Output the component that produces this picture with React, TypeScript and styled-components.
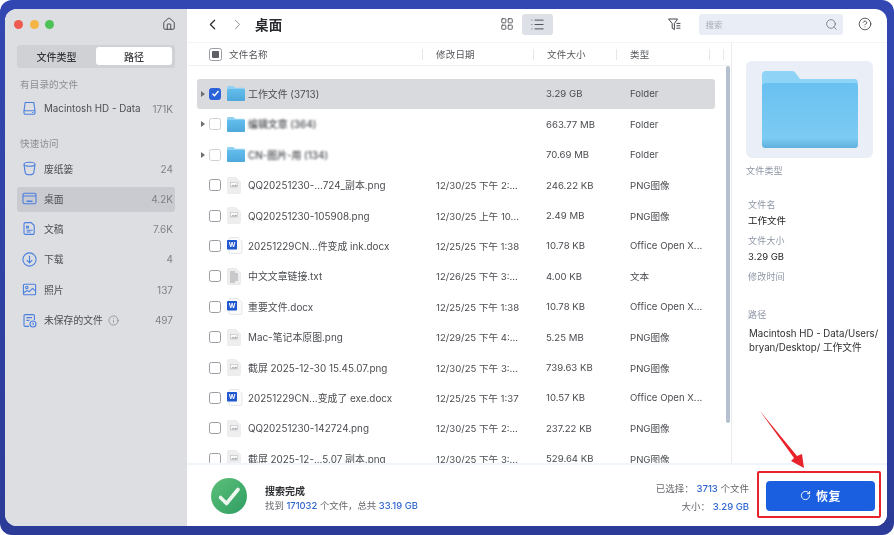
import React from "react";
import styled, { createGlobalStyle } from "styled-components";
import { ChevronLeft, ChevronRight, House, Search, CircleHelp, RotateCw, Info, LayoutGrid, List as ListIcon } from "lucide-react";

const Global = createGlobalStyle`
  html, body { margin: 0; padding: 0; background: #fff; }
  body { font-family: Inter, "Noto Sans CJK SC", sans-serif; overflow: hidden; }
  * { box-sizing: border-box; }
`;

const Frame = styled.div`
  position: relative;
  width: 894px;
  height: 535px;
  padding: 9px 7px 9px 5px;
  border-radius: 12px;
  background: linear-gradient(180deg, #3347b2 0%, #2b3b97 100%);
  filter: blur(0.3px);
`;
const Win = styled.div`
  height: 517px;
  display: flex;
  border-radius: 12px;
  overflow: hidden;
  background: #fff;
`;
const Sidebar = styled.aside`
  width: 182px;
  flex: none;
  background: #dcdee2;
  padding: 0 12px;
  display: flex;
  flex-direction: column;
`;
const TitleBar = styled.div`
  height: 30px;
  display: flex;
  align-items: center;
  gap: 6.5px;
  color: #3f4145;
`;
const Light = styled.span<{ $c: string }>`
  width: 9px;
  height: 9px;
  border-radius: 50%;
  background: ${(p) => p.$c};
  margin-left: ${(p) => (p.$c === "#ee5a50" ? "-3px" : "0")};
`;
const HomeBtn = styled.span`
  margin-left: auto;
  margin-right: -1px;
  display: flex;
  color: #3a3c40;
`;
const Segment = styled.div`
  margin-top: 6px;
  height: 23px;
  background: #cfd1d5;
  border-radius: 3px;
  display: flex;
  padding: 2px 3px 3px 0;
`;
const SegItem = styled.div<{ $on?: boolean }>`
  flex: ${(p) => (p.$on ? "0 0 76px" : "1")};
  background: ${(p) => (p.$on ? "#fff" : "transparent")};
  border-radius: 3px;
  font-size: 10px;
  font-weight: 500;
  color: #36383b;
  display: flex;
  align-items: center;
  justify-content: center;
`;
const SecTitle = styled.div<{ $mt: number }>`
  margin-top: ${(p) => p.$mt}px;
  height: 14px;
  line-height: 14px;
  padding-left: 3px;
  font-size: 9.5px;
  letter-spacing: 0.2px;
  color: #8b8d91;
`;
const SideRow = styled.div<{ $on?: boolean; $mt: number }>`
  margin-top: ${(p) => p.$mt}px;
  height: 25px;
  display: flex;
  align-items: center;
  padding: 0 2px 1px 5px;
  border-radius: 3px;
  background: ${(p) => (p.$on ? "#c9cbd0" : "transparent")};
  font-size: 9.8px;
  color: #4c4e52;
`;
const SideIcon = styled.span`
  width: 22px;
  flex: none;
  display: flex;
  align-items: center;
  color: #4b7fde;
`;
const SideHint = styled.span`
  display: inline-flex;
  margin-left: 5px;
  color: #5f6165;
`;
const SideCount = styled.span`
  margin-left: auto;
  color: #808286;
  font-size: 10px;
`;
const Main = styled.main`
  flex: 1;
  min-width: 0;
  display: flex;
  flex-direction: column;
`;
const Toolbar = styled.div`
  height: 34px;
  flex: none;
  display: flex;
  align-items: center;
  padding: 0 12px 3px 0;
  border-bottom: 1px solid #f3f4f6;
`;
const NavBtn = styled.span<{ $off?: boolean; $ml: number }>`
  display: flex;
  margin-left: ${(p) => p.$ml}px;
  color: ${(p) => (p.$off ? "#8f9195" : "#2f3135")};
`;
const PageTitle = styled.h1`
  margin: 0 0 0 9px;
  font-size: 13.5px;
  font-weight: 600;
  letter-spacing: 0.2px;
  color: #2a2b2e;
`;
const ViewBtn = styled.span<{ $on?: boolean; $ml: number }>`
  width: 31px;
  height: 21px;
  margin-left: ${(p) => p.$ml}px;
  display: flex;
  align-items: center;
  justify-content: center;
  border-radius: 3px;
  color: #3e4045;
  background: ${(p) => (p.$on ? "#dde0e6" : "transparent")};
`;
const FilterBtn = styled.span`
  margin-left: 114px;
  display: flex;
  color: #44464b;
`;
const SearchBox = styled.div`
  margin-left: 17px;
  width: 144px;
  height: 21px;
  background: #e9edf5;
  border-radius: 3px;
  display: flex;
  align-items: center;
  justify-content: space-between;
  padding: 0 5px 0 6px;
  font-size: 8.5px;
  color: #a7abb3;
`;
const HelpBtn = styled.span`
  margin-left: 15px;
  display: flex;
  color: #3a3c40;
`;
const Content = styled.div`
  flex: 1;
  min-height: 0;
  display: flex;
`;
const ListPane = styled.section`
  position: relative;
  width: 544px;
  flex: none;
  overflow: hidden;
`;
const HeaderRow = styled.div`
  height: 23px;
  display: grid;
  grid-template-columns: 22px 18px 196px 111px 83px 93px 14px;
  align-items: center;
  border-bottom: 1px solid #f0f1f4;
  font-size: 9.5px;
  letter-spacing: 0.2px;
  color: #55575b;
`;
const HCell = styled.div<{ $pad: number }>`
  height: 11px;
  line-height: 11px;
  padding-left: ${(p) => p.$pad}px;
  border-right: 1px solid #e6e7ea;
  white-space: nowrap;
`;
const Rows = styled.div`
  padding: 12.8px 0 0 10px;
`;
const Row = styled.div<{ $sel?: boolean }>`
  position: relative;
  height: 30.4px;
  width: 518px;
  padding: 0.7px 0;
  color: #4a4c50;
  font-size: 9.6px;
  &::before {
    content: "";
    position: absolute;
    inset: 0.7px 0;
    border-radius: 3px;
    background: ${(p) => (p.$sel ? "#d8dadd" : "transparent")};
  }
`;
const RowGrid = styled.div`
  position: relative;
  height: 29px;
  display: grid;
  grid-template-columns: 12px 18px 21px 188px 110px 84px 85px;
  align-items: center;
`;
const Arrow = styled.span`
  width: 0;
  height: 0;
  margin-left: 4px;
  border-left: 4px solid #6d6f73;
  border-top: 3px solid transparent;
  border-bottom: 3px solid transparent;
`;
const Check = styled.span<{ $on?: boolean; $big?: boolean; $soft?: boolean }>`
  width: ${(p) => (p.$big ? 13 : 12)}px;
  height: ${(p) => (p.$big ? 13 : 12)}px;
  border-radius: 2.5px;
  border: 1px solid ${(p) => (p.$on ? "#2a62d8" : p.$soft ? "#cfd0d4" : "#9b9da3")};
  background: ${(p) => (p.$on ? "#2a62d8" : "#fff")};
  display: flex;
  align-items: center;
  justify-content: center;
  color: #fff;
  ${(p) => (p.$soft ? "filter: blur(0.6px);" : "")}
`;
const HeadMark = styled.span`
  width: 7px;
  height: 7px;
  border-radius: 1px;
  background: #5e6066;
`;
const IconSlot = styled.span<{ $soft?: boolean }>`
  display: flex;
  align-items: center;
  ${(p) => (p.$soft ? "filter: blur(0.5px);" : "")}
`;
const Name = styled.span<{ $blur?: boolean }>`
  white-space: nowrap;
  font-size: 9.9px;
  ${(p) => (p.$blur ? "filter: blur(1.2px); font-weight: 500;" : "")}
`;
const Cell = styled.span`
  white-space: nowrap;
`;
const Scrollbar = styled.div`
  position: absolute;
  top: 23px;
  left: 539px;
  width: 4px;
  height: 357px;
  border-radius: 2px;
  background: #b4bfcf;
`;
const Detail = styled.aside`
  flex: 1;
  border-left: 1px solid #e9ebf0;
  padding: 18px 14px 0 14px;
  font-size: 9.5px;
`;
const Tile = styled.div`
  width: 127px;
  height: 97px;
  border-radius: 6px;
  background: #e9eef7;
  display: flex;
  align-items: center;
  justify-content: center;
`;
const DLabel = styled.div<{ $mt: number; $ml?: number }>`
  margin-top: ${(p) => p.$mt}px;
  margin-left: ${(p) => p.$ml ?? 2}px;
  height: 14px;
  line-height: 14px;
  color: #8e96a6;
  font-size: 9px;
  letter-spacing: 0.2px;
`;
const DValue = styled.div<{ $mt: number }>`
  margin-top: ${(p) => p.$mt}px;
  margin-left: 2px;
  height: 14px;
  line-height: 14px;
  color: #222326;
  font-size: 9.5px;
`;
const PathText = styled.div`
  margin: 5px 0 0 3px;
  width: 134px;
  font-size: 9.7px;
  line-height: 14px;
  color: #2f3033;
`;
const Bottom = styled.footer`
  height: 63px;
  flex: none;
  border-top: 2px solid #f0f5fb;
  background: #fff;
  display: flex;
  align-items: center;
  padding: 0 12px 0 24px;
`;
const Done = styled.div`
  margin: 6px 0 0 18px;
  display: flex;
  flex-direction: column;
  gap: 1px;
`;
const DoneTitle = styled.div`
  font-size: 10px;
  font-weight: 600;
  line-height: 13px;
  color: #2f3033;
`;
const DoneSub = styled.div`
  font-size: 9.4px;
  line-height: 13px;
  color: #65676c;
  white-space: nowrap;
`;
const Blue = styled.span`
  color: #2f66cf;
  font-weight: 500;
`;
const Selected = styled.div`
  margin: 4px 0 0 auto;
  display: flex;
  flex-direction: column;
  align-items: flex-end;
  gap: 5px;
  font-size: 9.5px;
  line-height: 13px;
  color: #65676c;
`;
const Restore = styled.button`
  margin-left: 17px;
  width: 109px;
  height: 30px;
  border: 0;
  border-radius: 4px;
  background: #1a5fe0;
  color: #fff;
  font-family: inherit;
  font-size: 12px;
  font-weight: 600;
  letter-spacing: 0.6px;
  display: flex;
  align-items: center;
  justify-content: center;
  gap: 5px;
`;
const RedBox = styled.div`
  position: absolute;
  left: 757px;
  top: 471px;
  width: 124px;
  height: 47px;
  border: 2px solid #e8222b;
  border-radius: 2px;
`;
const RedArrow = styled.svg`
  position: absolute;
  left: 755px;
  top: 405px;
`;

const Drive = () => (
  <svg width="15" height="15" viewBox="0 0 15 15" fill="none" stroke="currentColor" strokeWidth="1.1">
    <path d="M3.2 1.5h8.6l1.2 8.2v2.2a1.4 1.4 0 0 1-1.4 1.4H3.4A1.4 1.4 0 0 1 2 11.9V9.7z" />
    <path d="M2 9.7h11M10.2 11.5h1.2" />
  </svg>
);
const Trash = () => (
  <svg width="15" height="15" viewBox="0 0 15 15" fill="none" stroke="currentColor" strokeWidth="1.1">
    <ellipse cx="7.5" cy="3.2" rx="5.5" ry="2" />
    <path d="M2 3.5l1.2 8.2c.2 1.3 2.2 2.1 4.3 2.1s4.1-.8 4.3-2.1L13 3.5" />
  </svg>
);
const Desk = () => (
  <svg width="15" height="15" viewBox="0 0 15 15" fill="none" stroke="currentColor" strokeWidth="1.1">
    <rect x="1" y="2.2" width="13" height="10.6" rx="1.6" />
    <path d="M1 5h13" />
    <path d="M4.5 10.2h6" strokeWidth="1.6" />
  </svg>
);
const Doc = () => (
  <svg width="15" height="15" viewBox="0 0 15 15" fill="none" stroke="currentColor" strokeWidth="1.1">
    <path d="M3.4 1.6h5.8l3 3v7.4a1.4 1.4 0 0 1-1.4 1.4H3.4A1.4 1.4 0 0 1 2 12V3a1.4 1.4 0 0 1 1.4-1.4z" />
    <path d="M4.6 5.2h1.8v1.8H4.6zM4.6 9.2h6M4.6 11h4" />
  </svg>
);
const Down = () => (
  <svg width="15" height="15" viewBox="0 0 15 15" fill="none" stroke="currentColor" strokeWidth="1.1" strokeLinecap="round" strokeLinejoin="round">
    <circle cx="7.5" cy="7.5" r="6.6" />
    <path d="M7.5 4v6.6M5 8.4l2.5 2.4L10 8.4" />
  </svg>
);
const Photo = () => (
  <svg width="15" height="15" viewBox="0 0 15 15" fill="none" stroke="currentColor" strokeWidth="1.1" strokeLinejoin="round">
    <rect x="1.4" y="2.2" width="12.2" height="10.6" rx="1" />
    <circle cx="4.8" cy="5.4" r="1.2" />
    <path d="M1.6 11l3.4-2.6 2 1.4 3.6-3.4 2.8 2.4" />
  </svg>
);
const Unsaved = () => (
  <svg width="15" height="15" viewBox="0 0 15 15" fill="none" stroke="currentColor" strokeWidth="1.1">
    <path d="M7 13.4H3.2A1.2 1.2 0 0 1 2 12.2V2.8a1.2 1.2 0 0 1 1.2-1.2h8a1.2 1.2 0 0 1 1.2 1.2V7" />
    <path d="M4.4 4.6h5.6M4.4 7.4h3" />
    <circle cx="11" cy="11" r="3" fill="#dcdee2" />
    <path d="M11 9.6V11l1 .7" />
  </svg>
);
const FilterIcon = () => (
  <svg width="15" height="15" viewBox="0 0 15 15" fill="none" stroke="currentColor" strokeWidth="1" strokeLinejoin="round">
    <path d="M1.5 2h9L7.4 6.4v6.2L5.2 11.2V6.4z" />
    <path d="M9.4 6.4h4M9.4 8.8h4M9.4 11.2h4" />
  </svg>
);
const FolderSmall = ({ id }: { id: string }) => (
  <svg width="18" height="15" viewBox="0 0 18 15">
    <defs>
      <linearGradient id={id} x1="0" y1="0" x2="0" y2="1">
        <stop offset="0" stopColor="#62bdec" />
        <stop offset="1" stopColor="#4fa8dc" />
      </linearGradient>
    </defs>
    <path d="M1.5 0h5l1.6 1.8H16.5A1.5 1.5 0 0 1 18 3.3V13.5A1.5 1.5 0 0 1 16.5 15H1.5A1.5 1.5 0 0 1 0 13.5V1.5A1.5 1.5 0 0 1 1.5 0z" fill="#8fd0f3" />
    <rect x="0" y="3" width="18" height="12" rx="1.2" fill={`url(#${id})`} />
  </svg>
);
const PngFile = () => (
  <svg width="14" height="17" viewBox="0 0 14 17">
    <path d="M1.5 0.5h7.5l4.5 4.5v10a1.5 1.5 0 0 1-1.5 1.5H1.5A1 1 0 0 1 .5 15.5v-14a1 1 0 0 1 1-1z" fill="#eeeeef" stroke="#e6e6e8" strokeWidth=".6" />
    <rect x="3.6" y="5.4" width="6.8" height="4.6" fill="#fafafa" stroke="#bcbdc0" strokeWidth=".6" />
    <path d="M4 9.6l2-1.8 1.4 1 1.4-1.4 1.2 1.4v.7H4z" fill="#a8a9ad" />
  </svg>
);
const TxtFile = () => (
  <svg width="14" height="17" viewBox="0 0 14 17">
    <path d="M1.5 0.5h7.5l4.5 4.5v10a1.5 1.5 0 0 1-1.5 1.5H1.5A1 1 0 0 1 .5 15.5v-14a1 1 0 0 1 1-1z" fill="#eeeeef" stroke="#e2e2e4" strokeWidth=".6" />
    <path d="M3 4h5M3 6h8M3 8h8M3 10h8M3 12h8M3 14h5" stroke="#a3a4a8" strokeWidth="1" />
  </svg>
);
const WordFile = () => (
  <svg width="16" height="17" viewBox="0 0 16 17">
    <path d="M3 0.5h8l4 4v10.5a1.5 1.5 0 0 1-1.5 1.5H3.5A1.5 1.5 0 0 1 2 15V1.5A1 1 0 0 1 3 .5z" fill="#fbfbfc" stroke="#d9dbe0" strokeWidth=".7" />
    <rect x="0" y="3" width="10" height="9.5" rx=".8" fill="#1f58cf" />
    <text x="5" y="10" fontSize="6.5" fill="#fff" textAnchor="middle" fontWeight="700" fontFamily="Inter, sans-serif">W</text>
  </svg>
);
const BigFolder = () => (
  <svg width="96" height="77" viewBox="0 0 96 77">
    <defs>
      <linearGradient id="bigf" x1="0" y1="0" x2="0" y2="1">
        <stop offset="0" stopColor="#69c1f0" />
        <stop offset=".85" stopColor="#7ccbf3" />
        <stop offset="1" stopColor="#5fb0dd" />
      </linearGradient>
    </defs>
    <path d="M4 0h26c2 0 3 1 4 2.5L38 8h54a4 4 0 0 1 4 4v20H0V4a4 4 0 0 1 4-4z" fill="#8fd3f6" />
    <rect x="0" y="12" width="96" height="65" rx="3.5" fill="url(#bigf)" />
  </svg>
);
const GreenCheck = () => (
  <svg width="36" height="36" viewBox="0 0 36 36">
    <defs>
      <linearGradient id="gc" x1="0" y1="0" x2="1" y2="1">
        <stop offset="0" stopColor="#5cc07a" />
        <stop offset="1" stopColor="#2f9d62" />
      </linearGradient>
    </defs>
    <circle cx="18" cy="18" r="18" fill="url(#gc)" />
    <path d="M9.5 19.5l6 6L27 11.5" fill="none" stroke="#eef7ef" strokeWidth="3.6" strokeLinecap="round" strokeLinejoin="round" />
  </svg>
);

type FileRow = {
  name: string;
  date?: string;
  size: string;
  type: string;
  icon: "folder" | "png" | "txt" | "word";
  blur?: boolean;
  sel?: boolean;
};
const files: FileRow[] = [
  { name: "工作文件 (3713)", size: "3.29 GB", type: "Folder", icon: "folder", sel: true },
  { name: "编辑文章 (364)", size: "663.77 MB", type: "Folder", icon: "folder", blur: true },
  { name: "CN-图片-用 (134)", size: "70.69 MB", type: "Folder", icon: "folder", blur: true },
  { name: "QQ20251230-...724_副本.png", date: "12/30/25 下午 2:...", size: "246.22 KB", type: "PNG图像", icon: "png" },
  { name: "QQ20251230-105908.png", date: "12/30/25 上午 10...", size: "2.49 MB", type: "PNG图像", icon: "png" },
  { name: "20251229CN...件变成 ink.docx", date: "12/25/25 下午 1:38", size: "10.78 KB", type: "Office Open X...", icon: "word" },
  { name: "中文文章链接.txt", date: "12/26/25 下午 3:...", size: "4.00 KB", type: "文本", icon: "txt" },
  { name: "重要文件.docx", date: "12/25/25 下午 1:38", size: "10.78 KB", type: "Office Open X...", icon: "word" },
  { name: "Mac-笔记本原图.png", date: "12/29/25 下午 4:...", size: "5.25 MB", type: "PNG图像", icon: "png" },
  { name: "截屏 2025-12-30 15.45.07.png", date: "12/30/25 下午 3:...", size: "739.63 KB", type: "PNG图像", icon: "png" },
  { name: "20251229CN...变成了 exe.docx", date: "12/25/25 下午 1:37", size: "10.57 KB", type: "Office Open X...", icon: "word" },
  { name: "QQ20251230-142724.png", date: "12/30/25 下午 2:...", size: "237.22 KB", type: "PNG图像", icon: "png" },
  { name: "截屏 2025-12-...5.07 副本.png", date: "12/30/25 下午 3:...", size: "529.64 KB", type: "PNG图像", icon: "png" },
];

const FileIcon = ({ row, id }: { row: FileRow; id: string }) => {
  if (row.icon === "folder") return <FolderSmall id={id} />;
  if (row.icon === "word") return <WordFile />;
  if (row.icon === "txt") return <TxtFile />;
  return <PngFile />;
};

const sideItems = [
  { icon: <Trash />, label: "废纸篓", count: "24", mt: 5.5 },
  { icon: <Desk />, label: "桌面", count: "4.2K", mt: 5, on: true },
  { icon: <Doc />, label: "文稿", count: "7.6K", mt: 5.4 },
  { icon: <Down />, label: "下载", count: "4", mt: 5.4 },
  { icon: <Photo />, label: "照片", count: "137", mt: 5.4 },
  { icon: <Unsaved />, label: "未保存的文件", count: "497", mt: 5.4, hint: true },
];

export default function App() {
  return (
    <Frame>
      <Global />
      <Win>
        <Sidebar>
          <TitleBar>
            <Light $c="#ee5a50" />
            <Light $c="#f5b544" />
            <Light $c="#4fc257" />
            <HomeBtn>
              <House size={14} strokeWidth={1.5} />
            </HomeBtn>
          </TitleBar>
          <Segment>
            <SegItem>文件类型</SegItem>
            <SegItem $on>路径</SegItem>
          </Segment>
          <SecTitle $mt={10}>有目录的文件</SecTitle>
          <SideRow $mt={4.5}>
            <SideIcon>
              <Drive />
            </SideIcon>
            Macintosh HD - Data
            <SideCount>171K</SideCount>
          </SideRow>
          <SecTitle $mt={15.5}>快速访问</SecTitle>
          {sideItems.map((s) => (
            <SideRow key={s.label} $mt={s.mt} $on={s.on}>
              <SideIcon>{s.icon}</SideIcon>
              {s.label}
              {s.hint && (
                <SideHint>
                  <Info size={11} strokeWidth={1.1} />
                </SideHint>
              )}
              <SideCount>{s.count}</SideCount>
            </SideRow>
          ))}
        </Sidebar>
        <Main>
          <Toolbar>
            <NavBtn $ml={17}>
              <ChevronLeft size={17} strokeWidth={1.8} />
            </NavBtn>
            <NavBtn $off $ml={8}>
              <ChevronRight size={17} strokeWidth={1.4} />
            </NavBtn>
            <PageTitle>桌面</PageTitle>
            <ViewBtn $ml={209}>
              <LayoutGrid size={14} strokeWidth={1.4} />
            </ViewBtn>
            <ViewBtn $on $ml={0}>
              <ListIcon size={15} strokeWidth={1.4} />
            </ViewBtn>
            <FilterBtn>
              <FilterIcon />
            </FilterBtn>
            <SearchBox>
              搜索
              <Search size={13} strokeWidth={1.3} color="#5f636b" />
            </SearchBox>
            <HelpBtn>
              <CircleHelp size={14} strokeWidth={1.4} />
            </HelpBtn>
          </Toolbar>
          <Content>
            <ListPane>
              <HeaderRow>
                <span />
                <Check $big>
                  <HeadMark />
                </Check>
                <HCell $pad={2}>文件名称</HCell>
                <HCell $pad={13}>修改日期</HCell>
                <HCell $pad={13}>文件大小</HCell>
                <HCell $pad={13}>类型</HCell>
                <HCell $pad={0} />
              </HeaderRow>
              <Rows>
                {files.map((f, i) => (
                  <Row key={f.name} $sel={f.sel}>
                    <RowGrid>
                      {f.icon === "folder" ? <Arrow /> : <span />}
                      <Check $on={f.sel} $soft={f.blur}>
                        {f.sel && (
                          <svg width="9" height="9" viewBox="0 0 9 9" fill="none" stroke="#fff" strokeWidth="1.4">
                            <path d="M1.5 4.8l2 2 4-4.8" />
                          </svg>
                        )}
                      </Check>
                      <IconSlot $soft={f.blur}>
                        <FileIcon row={f} id={`sf${i}`} />
                      </IconSlot>
                      <Name $blur={f.blur}>{f.name}</Name>
                      <Cell>{f.date ?? ""}</Cell>
                      <Cell>{f.size}</Cell>
                      <Cell>{f.type}</Cell>
                    </RowGrid>
                  </Row>
                ))}
              </Rows>
              <Scrollbar />
            </ListPane>
            <Detail>
              <Tile>
                <BigFolder />
              </Tile>
              <DLabel $mt={6} $ml={0}>文件类型</DLabel>
              <DLabel $mt={20}>文件名</DLabel>
              <DValue $mt={2}>工作文件</DValue>
              <DLabel $mt={6}>文件大小</DLabel>
              <DValue $mt={2}>3.29 GB</DValue>
              <DLabel $mt={6}>修改时间</DLabel>
              <DLabel $mt={24}>路径</DLabel>
              <PathText>Macintosh HD - Data/Users/ bryan/Desktop/ 工作文件</PathText>
            </Detail>
          </Content>
          <Bottom>
            <GreenCheck />
            <Done>
              <DoneTitle>搜索完成</DoneTitle>
              <DoneSub>
                找到 <Blue>171032</Blue> 个文件，总共 <Blue>33.19 GB</Blue>
              </DoneSub>
            </Done>
            <Selected>
              <span>
                已选择： <Blue>3713</Blue> 个文件
              </span>
              <span>
                大小： <Blue>3.29 GB</Blue>
              </span>
            </Selected>
            <Restore>
              <RotateCw size={11} strokeWidth={2} />
              恢复
            </Restore>
          </Bottom>
        </Main>
      </Win>
      <RedBox />
      <RedArrow width="55" height="70" viewBox="0 0 55 70">
        <path d="M5 6L42 51l5-2 2 14-13-7 3-3z" fill="#e8222b" />
      </RedArrow>
    </Frame>
  );
}
